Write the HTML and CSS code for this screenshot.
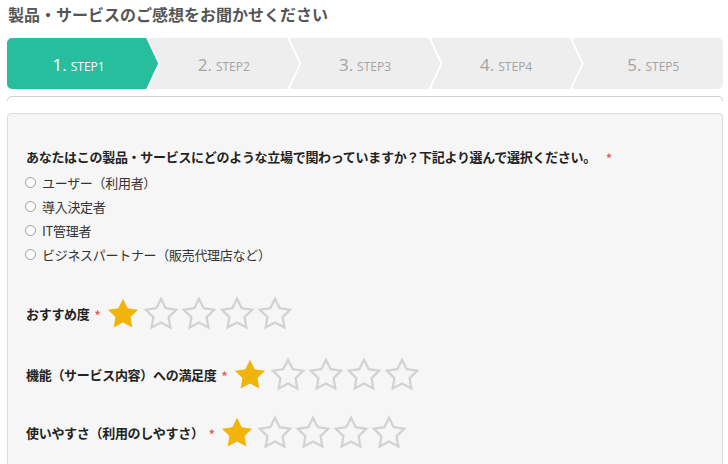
FILE: index.html
```html
<!DOCTYPE html>
<html lang="ja">
<head>
<meta charset="utf-8">
<title>製品・サービスのご感想</title>
<link rel="stylesheet" href="styles.css">
</head>
<body>
<svg class="defs" width="0" height="0" aria-hidden="true">
  <defs>
    <path id="star-shape" d="M12 2l3.09 6.26L22 9.27l-5 4.87 1.18 6.88L12 17.77l-6.18 3.25L7 14.14 2 9.27l6.91-1.01L12 2z"/>
  </defs>
</svg>
<div class="page">
  <h1 class="title">製品・サービスのご感想をお聞かせください</h1>
  <ol class="steps">
    <li class="step active"><span class="step-text"><span class="num">1.</span><span class="lbl">STEP1</span></span></li>
    <li class="step"><span class="step-text"><span class="num">2.</span><span class="lbl">STEP2</span></span></li>
    <li class="step"><span class="step-text"><span class="num">3.</span><span class="lbl">STEP3</span></span></li>
    <li class="step"><span class="step-text"><span class="num">4.</span><span class="lbl">STEP4</span></span></li>
    <li class="step"><span class="step-text"><span class="num">5.</span><span class="lbl">STEP5</span></span></li>
  </ol>
  <div class="tab-edge"></div>
  <div class="form-box">
    <div class="q">あなたはこの製品・サービスにどのような立場で関わっていますか？下記より選んで選択ください。<span class="req">*</span></div>
    <ul class="radios">
      <li><span class="radio"></span>ユーザー（利用者）</li>
      <li><span class="radio"></span>導入決定者</li>
      <li><span class="radio"></span>IT管理者</li>
      <li><span class="radio"></span>ビジネスパートナー（販売代理店など）</li>
    </ul>
    <div class="rating first">
      <span class="rlabel">おすすめ度</span><span class="req">*</span>
      <span class="stars">
        <svg class="star on" viewBox="1.5 1.5 21 20.5"><use href="#star-shape"/></svg>
        <svg class="star" viewBox="1.5 1.5 21 20.5"><use href="#star-shape"/></svg>
        <svg class="star" viewBox="1.5 1.5 21 20.5"><use href="#star-shape"/></svg>
        <svg class="star" viewBox="1.5 1.5 21 20.5"><use href="#star-shape"/></svg>
        <svg class="star" viewBox="1.5 1.5 21 20.5"><use href="#star-shape"/></svg>
      </span>
    </div>
    <div class="rating">
      <span class="rlabel">機能（サービス内容）への満足度</span><span class="req">*</span>
      <span class="stars">
        <svg class="star on" viewBox="1.5 1.5 21 20.5"><use href="#star-shape"/></svg>
        <svg class="star" viewBox="1.5 1.5 21 20.5"><use href="#star-shape"/></svg>
        <svg class="star" viewBox="1.5 1.5 21 20.5"><use href="#star-shape"/></svg>
        <svg class="star" viewBox="1.5 1.5 21 20.5"><use href="#star-shape"/></svg>
        <svg class="star" viewBox="1.5 1.5 21 20.5"><use href="#star-shape"/></svg>
      </span>
    </div>
    <div class="rating last">
      <span class="rlabel">使いやすさ（利用のしやすさ）</span><span class="req">*</span>
      <span class="stars">
        <svg class="star on" viewBox="1.5 1.5 21 20.5"><use href="#star-shape"/></svg>
        <svg class="star" viewBox="1.5 1.5 21 20.5"><use href="#star-shape"/></svg>
        <svg class="star" viewBox="1.5 1.5 21 20.5"><use href="#star-shape"/></svg>
        <svg class="star" viewBox="1.5 1.5 21 20.5"><use href="#star-shape"/></svg>
        <svg class="star" viewBox="1.5 1.5 21 20.5"><use href="#star-shape"/></svg>
      </span>
    </div>
  </div>
</div>
</body>
</html>
```

FILE: styles.css
```css
body {
  margin: 0;
  background: #fff;
  font-family: "Noto Sans CJK JP", "Noto Sans", sans-serif;
  overflow: hidden;
}

.defs {
  position: absolute;
  width: 0;
  height: 0;
}

.page {
  padding: 0 5px 0 7px;
}

.title {
  margin: 0;
  padding: 4px 0 0 1px;
  font-size: 16px;
  line-height: 20px;
  font-weight: bold;
  color: #555;
}

.steps {
  list-style: none;
  margin: 14px 0 0;
  padding: 0;
  display: flex;
  height: 51px;
}

.step {
  flex: none;
  box-sizing: border-box;
  width: calc((100% + 40px) / 5);
  margin-left: -10px;
  background: #eeeeee;
  color: #a3a3a3;
  clip-path: polygon(0 0, calc(100% - 12px) 0, 100% 50%, calc(100% - 12px) 100%, 0 100%, 12px 50%);
  border-radius: 3px;
  display: flex;
  align-items: center;
  justify-content: center;
  font-family: "Open Sans", "Liberation Sans", sans-serif;
}

.step:first-child {
  margin-left: 0;
  padding-right: 8px;
  clip-path: polygon(0 0, calc(100% - 12px) 0, 100% 50%, calc(100% - 12px) 100%, 0 100%);
  border-radius: 5px 3px 3px 5px;
}

.step:last-child {
  padding-left: 12px;
  clip-path: polygon(0 0, 100% 0, 100% 100%, 0 100%, 12px 50%);
  border-radius: 3px 5px 5px 3px;
}

.step.active {
  background: #26be9d;
  color: #fff;
}

.step-text {
  display: flex;
  align-items: baseline;
  padding-top: 1px;
}

.num {
  font-size: 17px;
  margin-right: 4px;
}

.lbl {
  font-size: 12px;
}

.tab-edge {
  margin-top: 7px;
  height: 4px;
  border: 1px solid #cfcfcf;
  border-bottom: 0;
  border-radius: 5px 5px 0 0;
}

.form-box {
  margin-top: 12px;
  height: 400px;
  border: 1px solid #dcdcdc;
  border-radius: 4px;
  background: #f6f6f6;
  padding: 33px 18px 0;
}

.q {
  font-size: 13px;
  line-height: 20px;
  letter-spacing: -0.3px;
  font-weight: bold;
  color: #222;
}

.req {
  color: #e35d5d;
  font-size: 12px;
  font-weight: bold;
  margin-left: 10px;
  position: relative;
  top: 1px;
}

.radios {
  list-style: none;
  margin: 3px 0 0;
  padding: 0;
}

.radios li {
  display: flex;
  align-items: center;
  height: 24px;
  font-size: 13px;
  letter-spacing: -0.3px;
  color: #333;
}

.radio {
  box-sizing: border-box;
  width: 11px;
  height: 11px;
  border: 1px solid #9a9a9a;
  border-radius: 50%;
  background: #fff;
  margin: 0 6px 0 -1px;
}

.rating {
  display: flex;
  align-items: center;
  height: 32px;
  margin-top: 29px;
}

.rating.first {
  margin-top: 31px;
}

.rating.last {
  margin-top: 26px;
}

.rlabel {
  font-size: 13px;
  font-weight: bold;
  letter-spacing: -0.3px;
  color: #222;
}

.rating .req {
  margin-left: 5px;
  margin-right: 6px;
}

.stars {
  display: flex;
  gap: 6px;
}

.star {
  width: 32px;
  height: 31px;
  overflow: visible;
  fill: none;
  stroke: #d2d2d2;
  stroke-width: 1.5;
  stroke-linejoin: miter;
}

.star.on {
  fill: #f0b40c;
  stroke: none;
}
```
